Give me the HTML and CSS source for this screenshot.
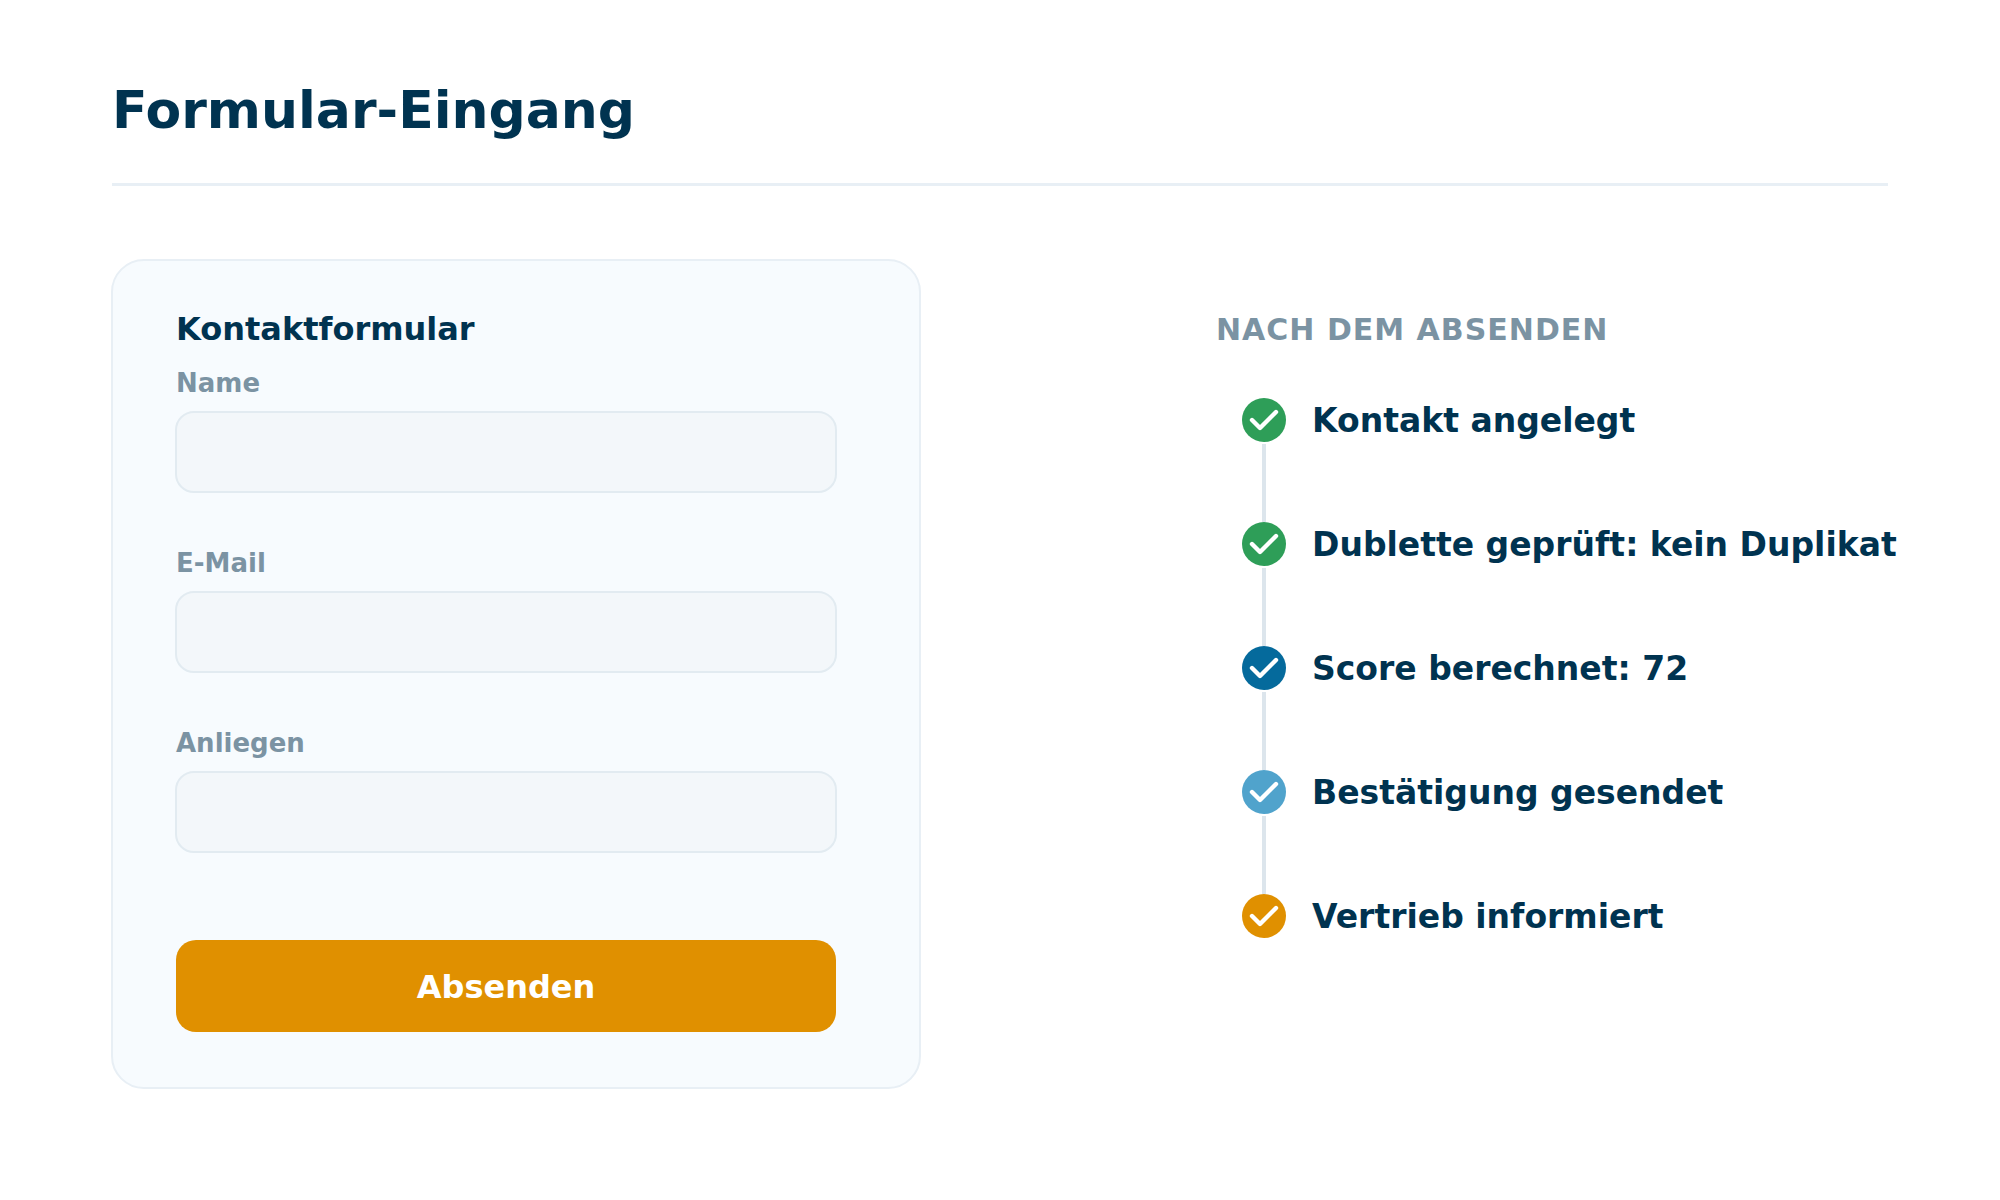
FILE: index.html
```html
<!doctype html>
<html lang="de">
  <head>
    <meta charset="UTF-8" />
    <meta name="viewport" content="width=device-width, initial-scale=1.0" />
    <title>Formular-Eingang</title>
    <link rel="stylesheet" href="styles.css">
  </head>
  <body>
    <header class="header">
      <h1 class="title">Formular-Eingang</h1>
    </header>

    <main class="content">
      <form class="card">
        <h2 class="card-title">Kontaktformular</h2>

        <div class="field">
          <label for="name">Name</label>
          <input type="text" id="name" name="name" />
        </div>
        <div class="field">
          <label for="email">E-Mail</label>
          <input type="email" id="email" name="email" />
        </div>
        <div class="field">
          <label for="anliegen">Anliegen</label>
          <input type="text" id="anliegen" name="anliegen" />
        </div>

        <button class="submit" type="submit">Absenden</button>
      </form>

      <section class="flow">
        <h2 class="flow-title">NACH DEM ABSENDEN</h2>
        <ol class="steps">
          <li class="step green">
            <svg class="check" viewBox="0 0 44 44" aria-hidden="true">
              <circle cx="22" cy="22" r="22" />
              <path d="M10 22l8 8 16-16" />
            </svg>
            <span>Kontakt angelegt</span>
          </li>
          <li class="step green">
            <svg class="check" viewBox="0 0 44 44" aria-hidden="true">
              <circle cx="22" cy="22" r="22" />
              <path d="M10 22l8 8 16-16" />
            </svg>
            <span>Dublette geprüft: kein Duplikat</span>
          </li>
          <li class="step blue">
            <svg class="check" viewBox="0 0 44 44" aria-hidden="true">
              <circle cx="22" cy="22" r="22" />
              <path d="M10 22l8 8 16-16" />
            </svg>
            <span>Score berechnet: 72</span>
          </li>
          <li class="step sky">
            <svg class="check" viewBox="0 0 44 44" aria-hidden="true">
              <circle cx="22" cy="22" r="22" />
              <path d="M10 22l8 8 16-16" />
            </svg>
            <span>Bestätigung gesendet</span>
          </li>
          <li class="step orange">
            <svg class="check" viewBox="0 0 44 44" aria-hidden="true">
              <circle cx="22" cy="22" r="22" />
              <path d="M10 22l8 8 16-16" />
            </svg>
            <span>Vertrieb informiert</span>
          </li>
        </ol>
      </section>
    </main>
  </body>
</html>
```
FILE: styles.css
```css
* {
  box-sizing: border-box;
}
body {
  margin: 0;
  background: #ffffff;
  color: #003350;
  font-family: "DejaVu Sans", sans-serif;
  font-weight: bold;
}
h1,
h2 {
  margin: 0;
}
.header {
  margin: 0 112px;
  padding: 78px 0 41px;
  border-bottom: 3px solid #e8eff5;
}
.title {
  font-size: 52px;
  line-height: 64px;
}
.content {
  display: grid;
  grid-template-columns: 810fr 688fr;
  column-gap: 295px;
  align-items: start;
  padding: 73px 96px 64px 111px;
}

/* Contact form */
.card {
  display: flex;
  flex-direction: column;
  padding: 48px 82px 55px 62px;
  background: #f7fbfe;
  border: 2px solid #e8eff5;
  border-radius: 33px;
}
.card-title {
  margin-bottom: 18px;
  padding-left: 1px;
  font-size: 32px;
  line-height: 40px;
}
.field {
  display: flex;
  flex-direction: column;
  gap: 12px;
}
.field + .field {
  margin-top: 54px;
}
.field label {
  padding-left: 1px;
  color: #7b93a3;
  font-size: 26px;
  line-height: 32px;
}
.field input {
  width: 100%;
  height: 82px;
  padding: 0 24px;
  background: #f3f7fa;
  border: 2px solid #e2ebf1;
  border-radius: 19px;
  color: inherit;
  font: inherit;
  font-size: 26px;
}
.submit {
  height: 92px;
  margin: 87px 1px 0;
  padding: 2px 0 0;
  background: #e09000;
  border: none;
  border-radius: 20px;
  color: #ffffff;
  font: inherit;
  font-size: 32px;
  cursor: pointer;
}

/* Steps after submit */
.flow {
  padding-top: 51px;
}
.flow-title {
  color: #7b93a3;
  font-size: 30px;
  line-height: 40px;
  letter-spacing: 1px;
}
.steps {
  margin: 48px 0 0;
  padding: 0 0 0 26px;
  list-style: none;
}
.step {
  display: grid;
  grid-template-columns: 44px 1fr;
  column-gap: 26px;
  font-size: 33px;
  line-height: 46px;
  white-space: nowrap;
}
/* connector down to the next circle */
.step:not(:last-child)::after {
  content: "";
  width: 4px;
  height: 78px;
  justify-self: center;
  background: #dce5ec;
}
.check {
  width: 44px;
  height: 44px;
}
.check circle {
  fill: currentColor;
}
.check path {
  fill: none;
  stroke: #ffffff;
  stroke-width: 4.4;
  stroke-linecap: round;
  stroke-linejoin: round;
}
.green .check {
  color: #2e9e58;
}
.blue .check {
  color: #056a9c;
}
.sky .check {
  color: #50a3cc;
}
.orange .check {
  color: #e09000;
}
```
